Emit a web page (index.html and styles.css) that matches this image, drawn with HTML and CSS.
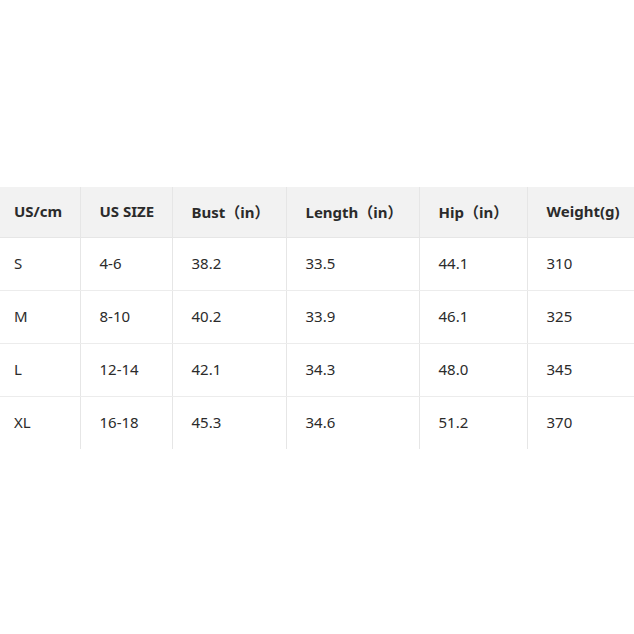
FILE: index.html
```html
<!DOCTYPE html>
<html>
<head>
<meta charset="utf-8">
<link rel="stylesheet" href="styles.css">
</head>
<body>
<div class="page">
  <table class="size-table">
    <colgroup>
      <col class="c1"><col class="c2"><col class="c3"><col class="c4"><col class="c5"><col class="c6">
    </colgroup>
    <thead>
      <tr><th>US/cm</th><th>US SIZE</th><th>Bust（in）</th><th>Length（in）</th><th>Hip（in）</th><th>Weight(g)</th></tr>
    </thead>
    <tbody>
      <tr><td>S</td><td>4-6</td><td>38.2</td><td>33.5</td><td>44.1</td><td>310</td></tr>
      <tr><td>M</td><td>8-10</td><td>40.2</td><td>33.9</td><td>46.1</td><td>325</td></tr>
      <tr><td>L</td><td>12-14</td><td>42.1</td><td>34.3</td><td>48.0</td><td>345</td></tr>
      <tr><td>XL</td><td>16-18</td><td>45.3</td><td>34.6</td><td>51.2</td><td>370</td></tr>
    </tbody>
  </table>
</div>
</body>
</html>
```
FILE: styles.css
```css
html, body {
  margin: 0;
  padding: 0;
  background: #fff;
}
.page {
  padding-top: 187px;
  width: 634px;
  overflow: hidden;
}
.size-table {
  border-collapse: collapse;
  table-layout: fixed;
  width: 634px;
  font-family: "Noto Sans", "Noto Sans CJK SC", sans-serif;
  font-size: 15px;
  color: #2b2b2b;
}
.c1 { width: 80px; }
.c2 { width: 92px; }
.c3 { width: 114px; }
.c4 { width: 133px; }
.c5 { width: 108px; }
.c6 { width: 107px; }
.size-table th,
.size-table td {
  text-align: left;
  padding: 0 0 2px 19px;
  border-left: 1px solid #e6e6e6;
  white-space: nowrap;
}
.size-table th:first-child,
.size-table td:first-child {
  border-left: none;
  padding-left: 14px;
}
.size-table th {
  background: #f2f2f2;
  font-weight: 700;
  height: 48px;
  border-bottom: 1px solid #e6e6e6;
}
.size-table td {
  height: 50px;
  border-bottom: 1px solid #ececec;
}
.size-table tbody tr:last-child td {
  border-bottom: none;
}
```
